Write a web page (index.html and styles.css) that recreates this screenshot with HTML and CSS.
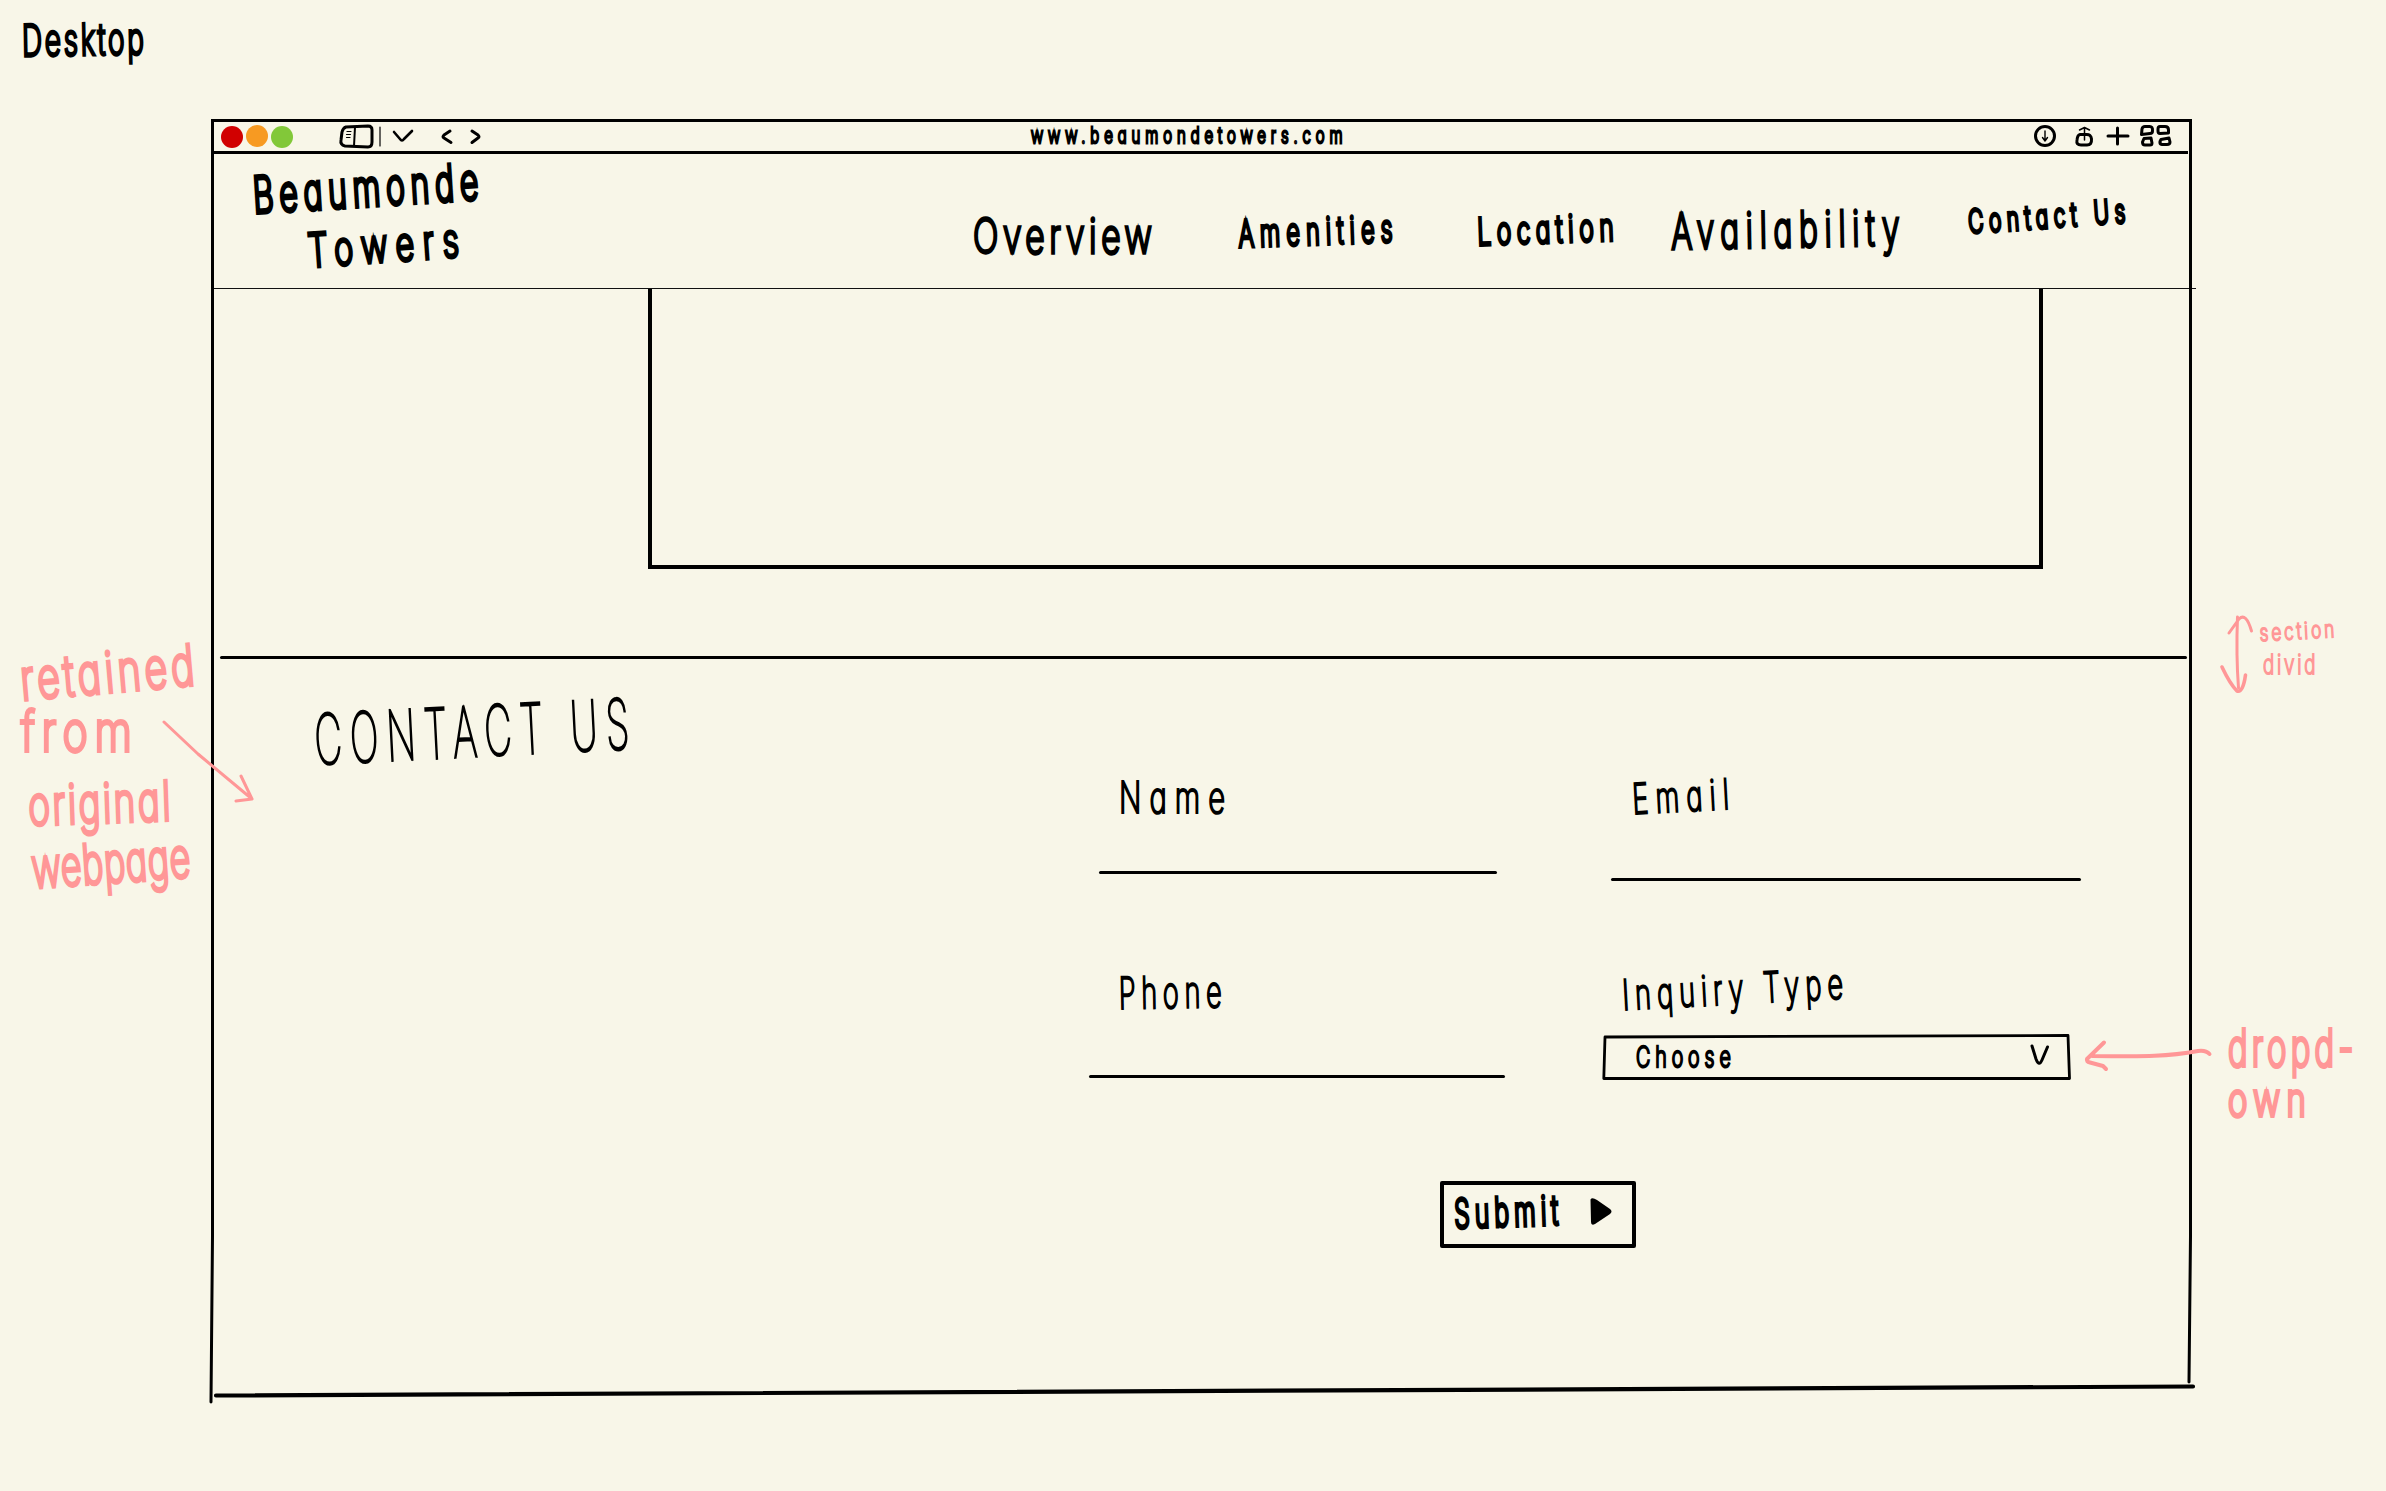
FILE: index.html
```html
<!DOCTYPE html>
<html lang="en">
<head>
<meta charset="utf-8">
<title>Beaumonde Towers – Contact Us wireframe</title>
<link rel="stylesheet" href="styles.css">
</head>
<body>
<div class="board">
  <h2 class="ink caption">Desktop</h2>

  <aside class="notes notes-left">
    <p class="ink note-retained">retained</p>
    <p class="ink note-from">from</p>
    <p class="ink note-original">original</p>
    <p class="ink note-webpage">webpage</p>
  </aside>

  <main class="window">
    <div class="toolbar">
      <div class="lights"><i class="light red"></i><i class="light amber"></i><i class="light green"></i></div>
      <svg class="tools-left" viewBox="0 0 150 30" fill="none" stroke="#000" stroke-width="3" stroke-linecap="round" stroke-linejoin="round">
        <path d="M8 5 L30 4 Q34 4 34 8 V20 Q34 25 30 25 L7 24 Q2 23 3 18 L4 10 Q5 6 8 5 Z"/>
        <path d="M17 5 L16 24" stroke-width="2"/>
        <path d="M9 9.500 H13 M8.500 12.500 H12.500 M8.500 15.500 H12" stroke-width="1.200"/>
        <path d="M42 5 V24" stroke-width="1.200"/>
        <path d="M56 10 L62 17 Q64 20 66 17 L74 9" stroke-width="2.600"/>
        <path d="M112 9 L106 13 Q104 15 106 16 L113 20.500"/>
        <path d="M134 9 L140 13 Q142 15 140 16 L134 20.500"/>
      </svg>
      <span class="ink url">www.beaumondetowers.com</span>
      <svg class="tools-right" viewBox="0 0 142 30" fill="none" stroke="#000" stroke-width="3" stroke-linecap="round" stroke-linejoin="round">
        <circle cx="14" cy="14" r="9.500"/>
        <path d="M14 9 V19 M11.500 15.500 L14 19 L16.500 15.500" stroke-width="1.400"/>
        <path d="M49 12.500 H55 Q60 12 60.500 17 Q61 23 56 23 H50 Q45 23 46 18 Q46.500 13 49 12.500 Z"/>
        <path d="M53.500 18 V6 M48.500 8 L53.500 5.500 L58.500 8" stroke-width="1.500"/>
        <path d="M77 14 H97 M86.500 6 V22"/>
        <path d="M114 4.500 H118 Q122 4 121.500 9 Q121.500 11.500 119 11.500 L110.500 12.500 L111 7 Q111.500 4.500 114 4.500 Z"/>
        <path d="M129 4.500 H134 Q137.500 4.500 137.500 8 V11 L129 11.500 Q127 11.500 127 9 V7 Q127 4.500 129 4.500 Z"/>
        <path d="M113 16.500 L120 16 L121 21 Q121 23 119 23 H114 Q111.500 23 111.500 20 Z"/>
        <path d="M130 17.500 L138 16 L139 20 Q139 22.500 136 22.500 H131 Q128.500 22 129 19.500 Z"/>
      </svg>
    </div>

    <header class="site-header">
      <div class="brand">
        <span class="ink brand-1">Beaumonde</span>
        <span class="ink brand-2">Towers</span>
      </div>
      <nav class="nav">
        <a class="ink nav-overview">Overview</a>
        <a class="ink nav-amenities">Amenities</a>
        <a class="ink nav-location">Location</a>
        <a class="ink nav-availability">Availability</a>
        <a class="ink nav-contact">Contact Us</a>
      </nav>
    </header>

    <section class="media"><div class="media-frame"></div></section>
    <div class="divider"></div>

    <section class="contact">
      <h1 class="ink title">CONTACT US</h1>
      <form class="form">
        <div class="field field-name"><label class="ink">Name</label><div class="line"></div></div>
        <div class="field field-email"><label class="ink">Email</label><div class="line"></div></div>
        <div class="field field-phone"><label class="ink">Phone</label><div class="line"></div></div>
        <div class="field field-type">
          <label class="ink">Inquiry Type</label>
          <div class="select">
            <svg class="select-box" viewBox="0 0 470 48" fill="none" stroke="#000" stroke-width="2.800" stroke-linejoin="round"><path d="M3 4 L466 2.500 L467.500 45.500 H1.800 Z"/></svg>
            <span class="ink choose">Choose</span>
            <svg class="chev" viewBox="0 0 20 24" fill="none" stroke="#000" stroke-width="3" stroke-linecap="round" stroke-linejoin="round"><path d="M2 3 L6 16 Q9 24 12 17 L17.500 4"/></svg>
          </div>
        </div>
        <div class="submit"><span class="ink">Submit</span>
          <svg class="play" viewBox="0 0 24 30"><path d="M1.500 2.500 Q3 0 8 3 L21 12 Q24 14.500 21 17 L6 27 Q2 29 2 25 Z"/></svg>
        </div>
      </form>
    </section>
  </main>

  <aside class="notes notes-right">
    <div class="note-section">
      <p class="ink note-s1">section</p>
      <p class="ink note-s2">divid</p>
    </div>
    <div class="note-dropdown">
      <p class="ink note-d1">dropd-</p>
      <p class="ink note-d2">own</p>
    </div>
  </aside>

  <svg class="overlay" viewBox="0 0 2386 1491" fill="none" stroke-linecap="round" stroke-linejoin="round">
    <g stroke="#000" stroke-width="3">
      <path d="M212.500 121 V1236 L211 1402"/>
      <path d="M2190.500 121 V1236 L2189 1382"/>
      <path d="M216 1395.500 L2193 1386.500" stroke-width="4.200"/>
    </g>
    <g stroke="#ff9797" stroke-width="3">
      <path d="M164 722 L198 754 L252 799 M241 776 L252 799 L236 801"/>
      <path d="M2237.500 617 Q2236 655 2238.500 688 M2229 633 L2239 619 Q2246 612 2251.500 631"/>
      <path d="M2222 667 Q2230 684 2237 691 Q2243 693 2245.500 675" stroke-width="3.600"/>
      <path d="M2209.500 1054 Q2206 1050 2198 1051 C2160 1058 2130 1056 2092 1056 M2104 1042.500 L2087 1059 Q2086 1061.500 2090 1062.500 L2103 1066 L2106 1069" stroke-width="4"/>
    </g>
  </svg>
</div>
</body>
</html>
```

FILE: styles.css
```css
* { box-sizing: border-box; margin: 0; padding: 0; }

body {
  background: #f8f6e8;
  color: #000;
  font-family: Inter, "Liberation Sans", sans-serif;
}

.board {
  position: relative;
  display: grid;
  grid-template-columns: 211px 1981px 194px;
  grid-template-rows: 119px 1372px;
  width: 2386px;
  height: 1491px;
  overflow: hidden;
}

.overlay { position: absolute; inset: 0; width: 2386px; height: 1491px; pointer-events: none; }

/* Hand-lettered text: --w is the width of the drawn word, --fs its size,
   --sx and --ls how narrow and how loosely it is lettered, --st the pen */
.ink {
  display: block;
  flex: none;
  width: var(--w);
  font-size: var(--fs);
  font-weight: 200;
  line-height: 1;
  white-space: nowrap;
  letter-spacing: var(--ls, 0);
  font-feature-settings: "cv11", "calt" 0;
  transform-origin: 0 86.4%;
  transform: rotate(var(--r, 0deg)) scaleX(var(--sx, 0.8));
  -webkit-text-stroke: var(--st, 2px) currentColor;
  paint-order: stroke fill;
  stroke-linejoin: round;
}

.caption { grid-column: 1 / -1; --w: 122px; --fs: 43px; --sx: .65; --ls: 4.4px; --r: -1deg; --st: 3.6px; margin: 19px 0 0 23px; }

/* Window chrome */
.window { grid-column: 2; display: flex; flex-direction: column; border-top: 3px solid #000; }
.notes-left { grid-column: 1; grid-row: 2; }
.notes-right { grid-column: 3; grid-row: 2; }

.toolbar { display: flex; align-items: flex-start; height: 32px; margin: 0 4px 0 2px; border-bottom: 3px solid #000; }
.lights { display: flex; gap: 3px; padding: 4px 0 0 8px; width: 125px; }
.light { width: 22px; height: 22px; border-radius: 50%; }
.red { background: #d10000; }
.amber { background: #f79a22; margin-top: -1px; }
.green { background: #82c839; }
.tools-left { width: 150px; height: 30px; flex: none; }
.url { --w: 312px; --fs: 22px; --sx: .68; --ls: 7.3px; --st: 2.8px; margin: 2px 0 0 543px; }
.tools-right { width: 142px; height: 30px; margin-left: 688px; flex: none; overflow: visible; }

.site-header { display: flex; height: 135px; margin-right: -4px; border-bottom: 1.5px solid #111; }
.brand { width: 760px; }
.brand-1 { --w: 228px; --fs: 50px; --sx: .64; --ls: 9px; --r: -3.5deg; --st: 4.4px; margin: 16px 0 0 43px; }
.brand-2 { --w: 152px; --fs: 46px; --sx: .7; --ls: 12.5px; --r: -4deg; --st: 4px; margin: 7px 0 0 98px; }
.nav { display: flex; }
.nav-overview { --w: 179px; --fs: 48px; --sx: .7; --ls: 6.6px; --st: 3.4px; margin: 58px 0 0 2px; }
.nav-amenities { --w: 155px; --fs: 37px; --sx: .63; --ls: 9.8px; --r: -2deg; --st: 4px; margin: 61px 0 0 88px; }
.nav-location { --w: 137px; --fs: 37px; --sx: .66; --ls: 8.6px; --r: -2deg; --st: 4px; margin: 59px 0 0 84px; }
.nav-availability { --w: 230px; --fs: 49px; --sx: .65; --ls: 10.3px; --r: -1deg; --st: 3.6px; margin: 53px 0 0 56px; }
.nav-contact { --w: 158px; --fs: 32px; --sx: .65; --ls: 8.8px; --r: -4deg; --st: 4px; margin: 52px 0 0 70px; }

.media { height: 367px; padding-left: 437px; }
.media-frame { width: 1395px; height: 280px; border: 4px solid #000; border-top: 0; }
.divider { height: 3px; margin: 0 5px 0 9px; background: #000; border-radius: 2px; }

/* Contact section */
.contact { display: flex; }
.title { --w: 312px; --fs: 69px; --sx: .55; --ls: 15px; --r: -2.9deg; --st: 2.8px; font-weight: 100; margin: 46px 0 0 123px; }
.form { display: grid; grid-template-columns: 514px 480px; grid-template-rows: 272px 152px 110px; margin-left: 443px; }
.field .ink { --st: 2.2px; }
.line { height: 3px; background: #000; border-radius: 2px; }
.field-name .ink { --w: 106px; --fs: 43px; --sx: .68; --ls: 11.8px; margin: 117px 0 0 30px; }
.field-name .line { width: 398px; margin: 52px 0 0 10px; }
.field-email .ink { --w: 97px; --fs: 42px; --sx: .65; --ls: 11px; --r: -3deg; margin: 119px 0 0 30px; }
.field-email .line { width: 470px; margin: 58px 0 0 8px; }
.field-phone .ink { --w: 103px; --fs: 44px; --sx: .62; --ls: 9.1px; --r: -1deg; margin: 40px 0 0 30px; }
.field-phone .line { width: 416px; margin: 60px 0 0; }
.field-type .ink { --w: 221px; --fs: 42px; --sx: .65; --ls: 9.1px; --r: -3deg; margin: 43px 0 0 20px; }
.select { position: relative; display: flex; width: 470px; height: 48px; margin: 17px 0 0 -1px; }
.select-box { position: absolute; inset: 0; }
.field-type .choose { --w: 95px; --fs: 28px; --sx: .7; --ls: 7.1px; --r: 0deg; --st: 2.6px; margin: 10px 0 0 34px; }
.chev { width: 20px; height: 24px; margin: 10px 0 0 299px; }
.submit { display: flex; width: 196px; height: 67px; margin: 98px 0 0 351px; border: 4px solid #000; border-radius: 2px; }
.submit .ink { --w: 106px; --fs: 40px; --sx: .62; --ls: 8.2px; --r: -2deg; --st: 4.2px; margin: 9px 0 0 11px; }
.play { width: 24px; height: 30px; margin: 12px 0 0 28px; }

/* Margin notes */
.notes { color: #ff9797; }
.note-retained { --w: 175px; --fs: 56px; --sx: .7; --ls: 5.7px; --r: -5deg; --st: 4px; margin: 533px 0 0 22px; }
.note-from { --w: 111px; --fs: 55px; --sx: .78; --ls: 8.8px; --st: 3.8px; margin: -4px 0 0 21px; }
.note-original { --w: 142px; --fs: 54px; --sx: .68; --ls: 3.8px; --r: -2deg; --st: 4px; margin: 20px 0 0 29px; }
.note-webpage { --w: 158px; --fs: 55px; --sx: .65; --ls: 1.2px; --r: -4deg; --st: 4px; margin: 8px 0 0 33px; }
.notes-right { padding-left: 36px; }
.note-s1 { --w: 75px; --fs: 23px; --sx: .75; --ls: 4px; --r: -3deg; --st: 2px; margin: 503px 0 0 32px; }
.note-s2 { --w: 53px; --fs: 27px; --sx: .7; --ls: 4px; --st: 2px; margin: 6px 0 0 35px; }
.note-d1 { --w: 125px; --fs: 50px; --sx: .66; --ls: 6.6px; --st: 4px; margin: 345px 0 0 0; }
.note-d2 { --w: 80px; --fs: 45px; --sx: .73; --ls: 9px; --st: 4px; margin: 4px 0 0 0; }
```
